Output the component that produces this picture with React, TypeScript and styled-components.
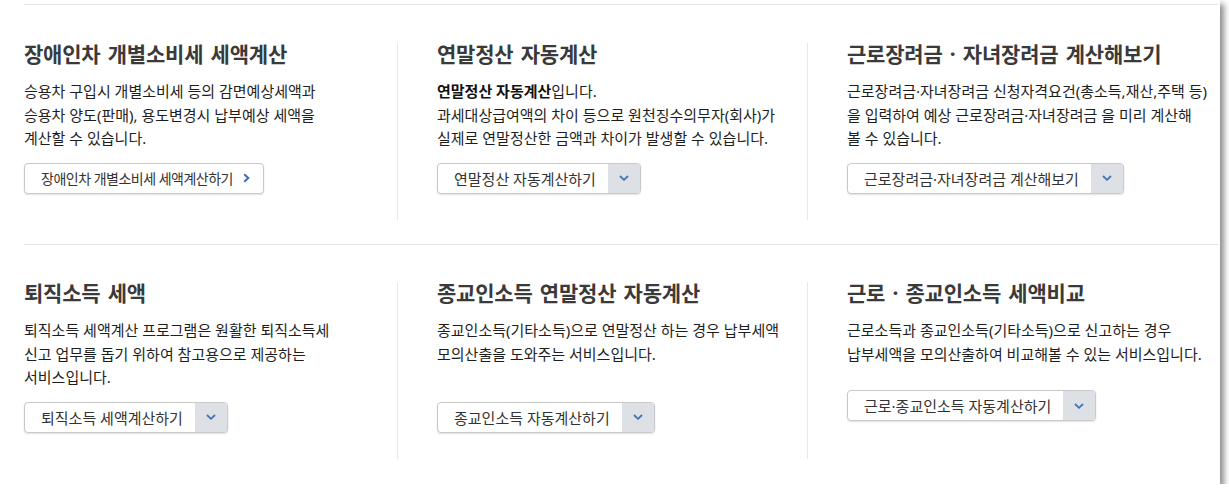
import React from "react";
import styled, { createGlobalStyle } from "styled-components";

const KR = `"Noto Sans", "Noto Sans CJK KR", sans-serif`;

const Global = createGlobalStyle`
  html, body { margin: 0; padding: 0; background: #ffffff; }
  body { font-family: ${KR}; }
  * { box-sizing: border-box; }
`;

const Frame = styled.div`
  width: 1220px;
  height: 484px;
  background: #ffffff;
  box-shadow: 4px 4px 6px rgba(0, 0, 0, 0.45);
  padding: 4px 2px 0 24px;
`;

const Row = styled.section<{ $top: number }>`
  display: grid;
  grid-template-columns: 373px 410px 1fr;
  border-top: 1px solid #e6e6e6;
  padding: ${(p) => p.$top}px 0 24px 0;
`;

const Col = styled.div<{ $first?: boolean }>`
  height: 177px;
  display: flex;
  flex-direction: column;
  align-items: flex-start;
  border-left: ${(p) => (p.$first ? "none" : "1px solid #e8e8e8")};
  padding-left: ${(p) => (p.$first ? 0 : 39)}px;
`;

const Title = styled.h2`
  margin: 0;
  font-family: ${KR};
  font-size: 21px;
  line-height: 22px;
  font-weight: 700;
  color: #3a3a3a;
  letter-spacing: -0.2px;
  word-spacing: 2px;
  white-space: nowrap;
`;

const Desc = styled.p<{ $min?: boolean }>`
  margin: 15px 0 0 0;
  font-family: ${KR};
  font-size: 15px;
  line-height: 23.5px;
  color: #1e1e1e;
  min-height: ${(p) => (p.$min ? "70.5px" : "0")};
  b { font-weight: 700; color: #111; }
`;

const Line = styled.span`
  display: block;
  white-space: nowrap;
`;

const Button = styled.a<{ $gap: number }>`
  margin-top: ${(p) => p.$gap}px;
  height: 31px;
  display: inline-flex;
  align-items: stretch;
  border: 1px solid #c9c9c9;
  border-radius: 4px;
  background: #ffffff;
  box-shadow: 0 1px 2px rgba(0, 0, 0, 0.12);
  overflow: hidden;
  text-decoration: none;
  cursor: pointer;
`;

const Label = styled.span<{ $tight?: boolean }>`
  display: flex;
  align-items: center;
  padding: 0 ${(p) => (p.$tight ? 10 : 12)}px 0 16px;
  font-family: ${KR};
  font-size: ${(p) => (p.$tight ? 14 : 15)}px;
  letter-spacing: ${(p) => (p.$tight ? "-0.5px" : "0")};
  color: #333333;
  white-space: nowrap;
`;

const Toggle = styled.span`
  width: 32px;
  display: flex;
  align-items: center;
  justify-content: center;
  background: #dde1e6;
`;

const Arrow = styled.span`
  display: flex;
  align-items: center;
  padding-right: 13px;
`;

const ChevronRight = () => (
  <svg width="7" height="10" viewBox="0 0 7 10">
    <path d="M1.2 1.2 L5.3 5 L1.2 8.8" fill="none" stroke="#3e6fb8" strokeWidth="2" />
  </svg>
);

const ChevronDown = () => (
  <svg width="10" height="6" viewBox="0 0 10 6">
    <path d="M1 1 L5 4.8 L9 1" fill="none" stroke="#4472b6" strokeWidth="1.8" />
  </svg>
);

type Card = {
  title: string;
  lines: React.ReactNode[];
  button: string;
  link?: boolean;
  min?: boolean;
  gap?: number;
};

const rows: Card[][] = [
  [
    {
      title: "장애인차 개별소비세 세액계산",
      lines: [
        "승용차 구입시 개별소비세 등의 감면예상세액과",
        "승용차 양도(판매), 용도변경시 납부예상 세액을",
        "계산할 수 있습니다.",
      ],
      button: "장애인차 개별소비세 세액계산하기",
      link: true,
    },
    {
      title: "연말정산 자동계산",
      lines: [
        <>
          <b>연말정산 자동계산</b>입니다.
        </>,
        "과세대상급여액의 차이 등으로 원천징수의무자(회사)가",
        "실제로 연말정산한 금액과 차이가 발생할 수 있습니다.",
      ],
      button: "연말정산 자동계산하기",
    },
    {
      title: "근로장려금 · 자녀장려금 계산해보기",
      lines: [
        "근로장려금·자녀장려금 신청자격요건(총소득,재산,주택 등)",
        "을 입력하여 예상 근로장려금·자녀장려금 을 미리 계산해",
        "볼 수 있습니다.",
      ],
      button: "근로장려금·자녀장려금 계산해보기",
    },
  ],
  [
    {
      title: "퇴직소득 세액",
      lines: [
        "퇴직소득 세액계산 프로그램은 원활한 퇴직소득세",
        "신고 업무를 돕기 위하여 참고용으로 제공하는",
        "서비스입니다.",
      ],
      button: "퇴직소득 세액계산하기",
    },
    {
      title: "종교인소득 연말정산 자동계산",
      lines: [
        "종교인소득(기타소득)으로 연말정산 하는 경우 납부세액",
        "모의산출을 도와주는 서비스입니다.",
      ],
      button: "종교인소득 자동계산하기",
      min: true,
    },
    {
      title: "근로 · 종교인소득 세액비교",
      lines: [
        "근로소득과 종교인소득(기타소득)으로 신고하는 경우",
        "납부세액을 모의산출하여 비교해볼 수 있는 서비스입니다.",
      ],
      button: "근로·종교인소득 자동계산하기",
      gap: 24,
    },
  ],
];

export default function App() {
  return (
    <>
      <Global />
      <Frame>
        {rows.map((row, ri) => (
          <Row key={ri} $top={ri === 0 ? 38 : 37}>
            {row.map((card, ci) => (
              <Col key={ci} $first={ci === 0}>
                <Title>{card.title}</Title>
                <Desc $min={card.min}>
                  {card.lines.map((l, li) => (
                    <Line key={li}>{l}</Line>
                  ))}
                </Desc>
                <Button $gap={card.gap ?? 12}>
                  <Label $tight={card.link}>{card.button}</Label>
                  {card.link ? (
                    <Arrow>
                      <ChevronRight />
                    </Arrow>
                  ) : (
                    <Toggle>
                      <ChevronDown />
                    </Toggle>
                  )}
                </Button>
              </Col>
            ))}
          </Row>
        ))}
      </Frame>
    </>
  );
}
